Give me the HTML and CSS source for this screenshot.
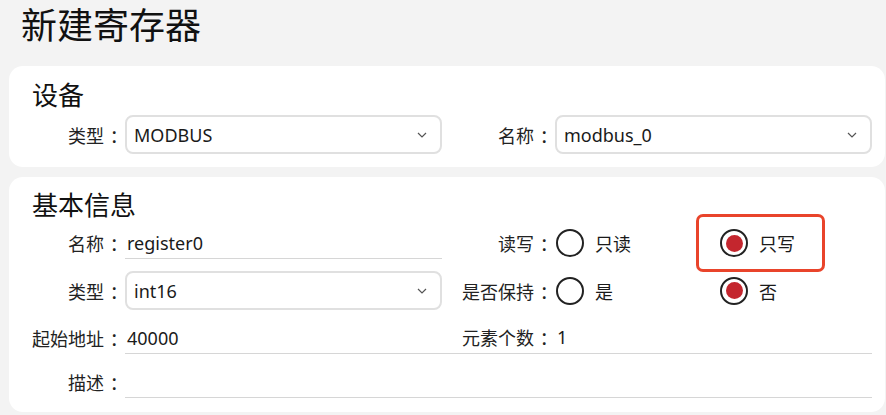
FILE: index.html
```html
<!DOCTYPE html>
<html lang="zh-CN">
<head>
    <meta charset="UTF-8">
    <title>新建寄存器</title>
    <link rel="stylesheet" href="styles.css">
</head>
<body>
    <h1 class="page-title">新建寄存器</h1>

    <!-- 设备 -->
    <section class="card device-card">
        <h2 class="card-title">设备</h2>
        <div class="form-grid">
            <label class="field-label">类型<span class="colon">：</span></label>
            <div class="select">
                <span>MODBUS</span>
                <svg class="chevron" width="10" height="6" viewBox="0 0 10 6"><path d="M1 1 L5 5 L9 1" fill="none" stroke="#555" stroke-width="1.2"/></svg>
            </div>
            <label class="field-label">名称<span class="colon">：</span></label>
            <div class="select">
                <span>modbus_0</span>
                <svg class="chevron" width="10" height="6" viewBox="0 0 10 6"><path d="M1 1 L5 5 L9 1" fill="none" stroke="#555" stroke-width="1.2"/></svg>
            </div>
        </div>
    </section>

    <!-- 基本信息 -->
    <section class="card info-card">
        <h2 class="card-title">基本信息</h2>
        <div class="form-grid info-grid">
            <label class="field-label">名称<span class="colon">：</span></label>
            <div class="line-input">register0</div>

            <label class="field-label">读写<span class="colon">：</span></label>
            <div class="radio-group">
                <div class="radio-option"><span class="radio"></span>只读</div>
                <div class="radio-option marked"><span class="radio checked"></span>只写</div>
            </div>

            <label class="field-label">类型<span class="colon">：</span></label>
            <div class="select">
                <span>int16</span>
                <svg class="chevron" width="10" height="6" viewBox="0 0 10 6"><path d="M1 1 L5 5 L9 1" fill="none" stroke="#555" stroke-width="1.2"/></svg>
            </div>

            <label class="field-label">是否保持<span class="colon">：</span></label>
            <div class="radio-group">
                <div class="radio-option"><span class="radio"></span>是</div>
                <div class="radio-option"><span class="radio checked"></span>否</div>
            </div>

            <label class="field-label">起始地址<span class="colon">：</span></label>
            <div class="line-input">40000</div>

            <div class="pair-field">
                <label class="field-label">元素个数<span class="colon">：</span></label>
                <div class="line-input plain">1</div>
            </div>

            <label class="field-label">描述<span class="colon">：</span></label>
            <div class="line-input wide"></div>
        </div>
    </section>
</body>
</html>
```

FILE: styles.css
```css
html, body {
    margin: 0;
    background: #f3f3f3;
    font-family: "Noto Sans", "Noto Sans CJK SC", sans-serif;
    color: #1a1a1a;
}
body { padding: 0 0 0 9px; }

.page-title {
    margin: 4px 0 0 12px;
    font-size: 36px; font-weight: normal; line-height: 44px;
    color: #111;
}

.card {
    background: #fff;
    border-radius: 14px;
    margin-right: 1px;
    padding: 11px 13px 13px 20px;
}
.device-card { margin-top: 18px; }
.info-card { margin-top: 10px; padding-top: 10px; padding-bottom: 14px; }

.card-title {
    margin: 0 0 2px 3px;
    font-size: 26px; font-weight: normal; line-height: 36px;
    color: #111;
}
.info-card .card-title { margin-bottom: 4px; }

.form-grid {
    display: grid;
    grid-template-columns: 96px 317px 113px 317px;
    align-items: center;
}
.info-grid {
    grid-template-rows: 32px 39px 32px 32px;
    row-gap: 12px;
}

.field-label {
    font-size: 18px; color: #222;
    text-align: right; padding-right: 3px;
    white-space: nowrap;
}
/* 冒号放在格子中间 */
.colon {
    display: inline-block; width: 1em; box-sizing: border-box;
    padding-left: 0.32em; text-align: left;
}

/* 下拉框 */
.select {
    height: 39px; box-sizing: border-box;
    display: flex; align-items: center; justify-content: space-between;
    padding: 0 13px 0 7px;
    border: 2px solid #e0e0e0; border-radius: 8px;
    font-size: 18px;
}
.chevron { display: block; }

/* 下划线输入 */
.line-input {
    height: 32px; box-sizing: border-box;
    display: flex; align-items: center;
    padding-left: 2px;
    font-size: 18px;
    border-bottom: 1px solid #d6d6d6;
    align-self: end;
}
.line-input.wide { grid-column: 2 / 5; }
.line-input.plain { border-bottom: none; }

.pair-field {
    grid-column: 3 / 5;
    display: grid;
    grid-template-columns: 113px 317px;
    align-items: center;
    height: 32px;
    border-bottom: 1px solid #d6d6d6;
    align-self: end;
}

/* 单选 */
.radio-group { display: flex; align-items: center; height: 100%; }
.radio-option {
    width: 164px; flex-shrink: 0;
    display: flex; align-items: center; gap: 11px;
    font-size: 18px;
    position: relative;
}
.radio {
    width: 28px; height: 28px; box-sizing: border-box;
    border: 2.5px solid #222; border-radius: 50%;
    display: flex; align-items: center; justify-content: center;
    margin-left: 1px;
}
.radio.checked::after {
    content: ""; width: 17px; height: 17px;
    border-radius: 50%; background: #c4262e;
}
/* 红框标注 */
.radio-option.marked::before {
    content: "";
    position: absolute; left: -23px; top: -15px;
    width: 129px; height: 58px; box-sizing: border-box;
    border: 3px solid #e9442b; border-radius: 7px;
}
```
